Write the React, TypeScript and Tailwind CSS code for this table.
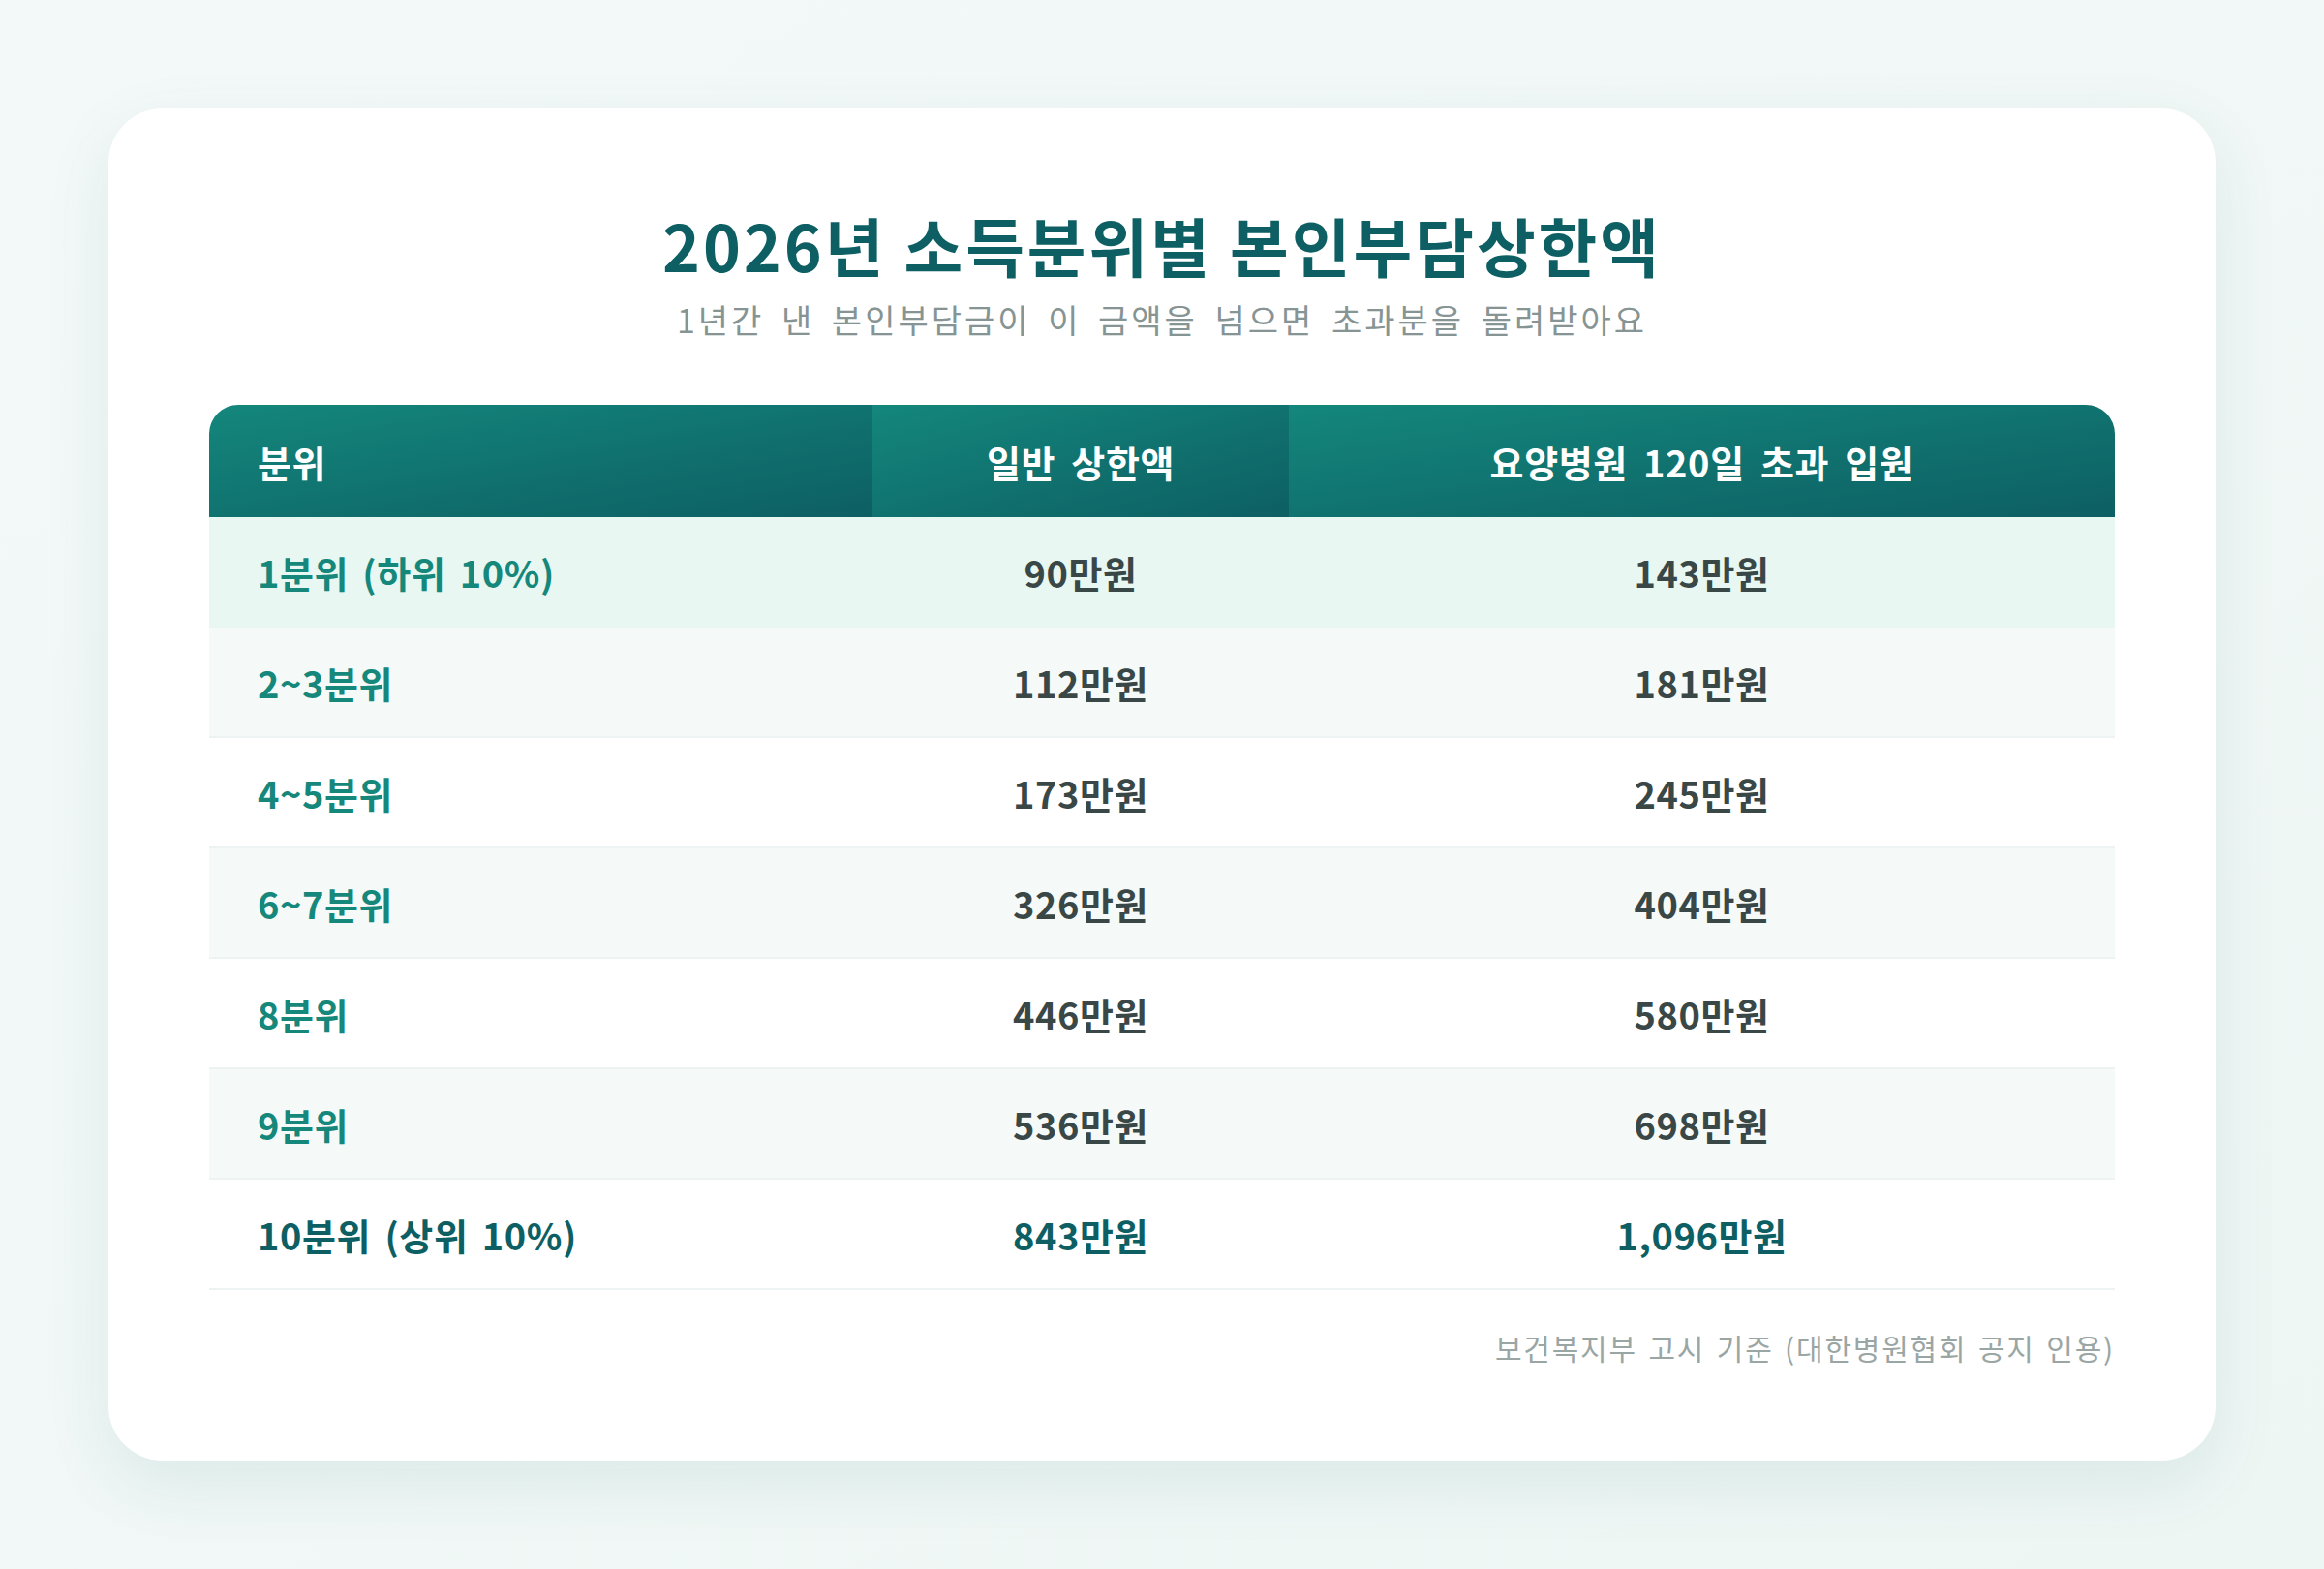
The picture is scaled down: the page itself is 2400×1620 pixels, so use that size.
import React from 'react';

const rows = [
  { label: '1분위 (하위 10%)', normal: '90만원', long: '143만원', tone: 'mint' },
  { label: '2~3분위', normal: '112만원', long: '181만원', tone: 'soft' },
  { label: '4~5분위', normal: '173만원', long: '245만원', tone: 'white' },
  { label: '6~7분위', normal: '326만원', long: '404만원', tone: 'soft' },
  { label: '8분위', normal: '446만원', long: '580만원', tone: 'white' },
  { label: '9분위', normal: '536만원', long: '698만원', tone: 'soft' },
  { label: '10분위 (상위 10%)', normal: '843만원', long: '1,096만원', tone: 'top' },
];

const font = { fontFamily: '"Noto Sans CJK KR", "Noto Sans", sans-serif' };

const App = () => {
  return (
    <div
      className="min-h-screen w-full bg-gradient-to-br from-[#f3f9f8] to-[#eef6f4] pt-[112px] pb-[112px]"
      style={font}
    >
      <div className="mx-auto w-[2176px] rounded-[56px] bg-white px-[104px] pt-[100px] pb-[97px] shadow-[0_24px_70px_rgba(13,95,99,0.09)]">
        <h1 className="text-center text-[66px] font-bold leading-[80px] tracking-[3px] text-[#0d5f63]">
          2026년 소득분위별 본인부담상한액
        </h1>
        <p className="mt-[16px] text-center text-[34px] leading-[44px] tracking-[3px] [word-spacing:7px] text-[#869493]">
          1년간 낸 본인부담금이 이 금액을 넘으면 초과분을 돌려받아요
        </p>

        <div className="mt-[66px] overflow-hidden rounded-t-[30px] tracking-[0.6px] [word-spacing:5px]">
          <div className="grid h-[116px] grid-cols-[685px_430px_1fr] text-[38px] font-bold text-white [word-spacing:7px]">
            <div className="flex items-center bg-gradient-to-br from-[#14877c] to-[#0d5f63] pl-[50px]">분위</div>
            <div className="flex items-center justify-center bg-gradient-to-br from-[#14877c] to-[#0d5f63]">일반 상한액</div>
            <div className="flex items-center justify-center bg-gradient-to-br from-[#14877c] to-[#0d5f63]">요양병원 120일 초과 입원</div>
          </div>

          {rows.map((r) => (
            <div
              key={r.label}
              className={
                'grid h-[114px] grid-cols-[685px_430px_1fr] border-b-2 text-[38px] font-bold ' +
                (r.tone === 'mint'
                  ? 'border-transparent bg-[#e8f7f2]'
                  : r.tone === 'soft'
                    ? 'border-[#edf3f2] bg-[#f5faf9]'
                    : 'border-[#edf3f2] bg-white')
              }
            >
              <div className={'flex items-center pl-[50px] ' + (r.tone === 'top' ? 'text-[#0d5f63]' : 'text-[#15877b]')}>
                {r.label}
              </div>
              <div className={'flex items-center justify-center ' + (r.tone === 'top' ? 'text-[#0d5f63]' : 'text-[#3a4747]')}>
                {r.normal}
              </div>
              <div className={'flex items-center justify-center ' + (r.tone === 'top' ? 'text-[#0d5f63]' : 'text-[#3a4747]')}>
                {r.long}
              </div>
            </div>
          ))}
        </div>

        <p className="mt-[39px] text-right text-[30px] leading-[40px] tracking-[1.8px] [word-spacing:3px] text-[#9aa6a4]">
          보건복지부 고시 기준 (대한병원협회 공지 인용)
        </p>
      </div>
    </div>
  );
};

export default App;
